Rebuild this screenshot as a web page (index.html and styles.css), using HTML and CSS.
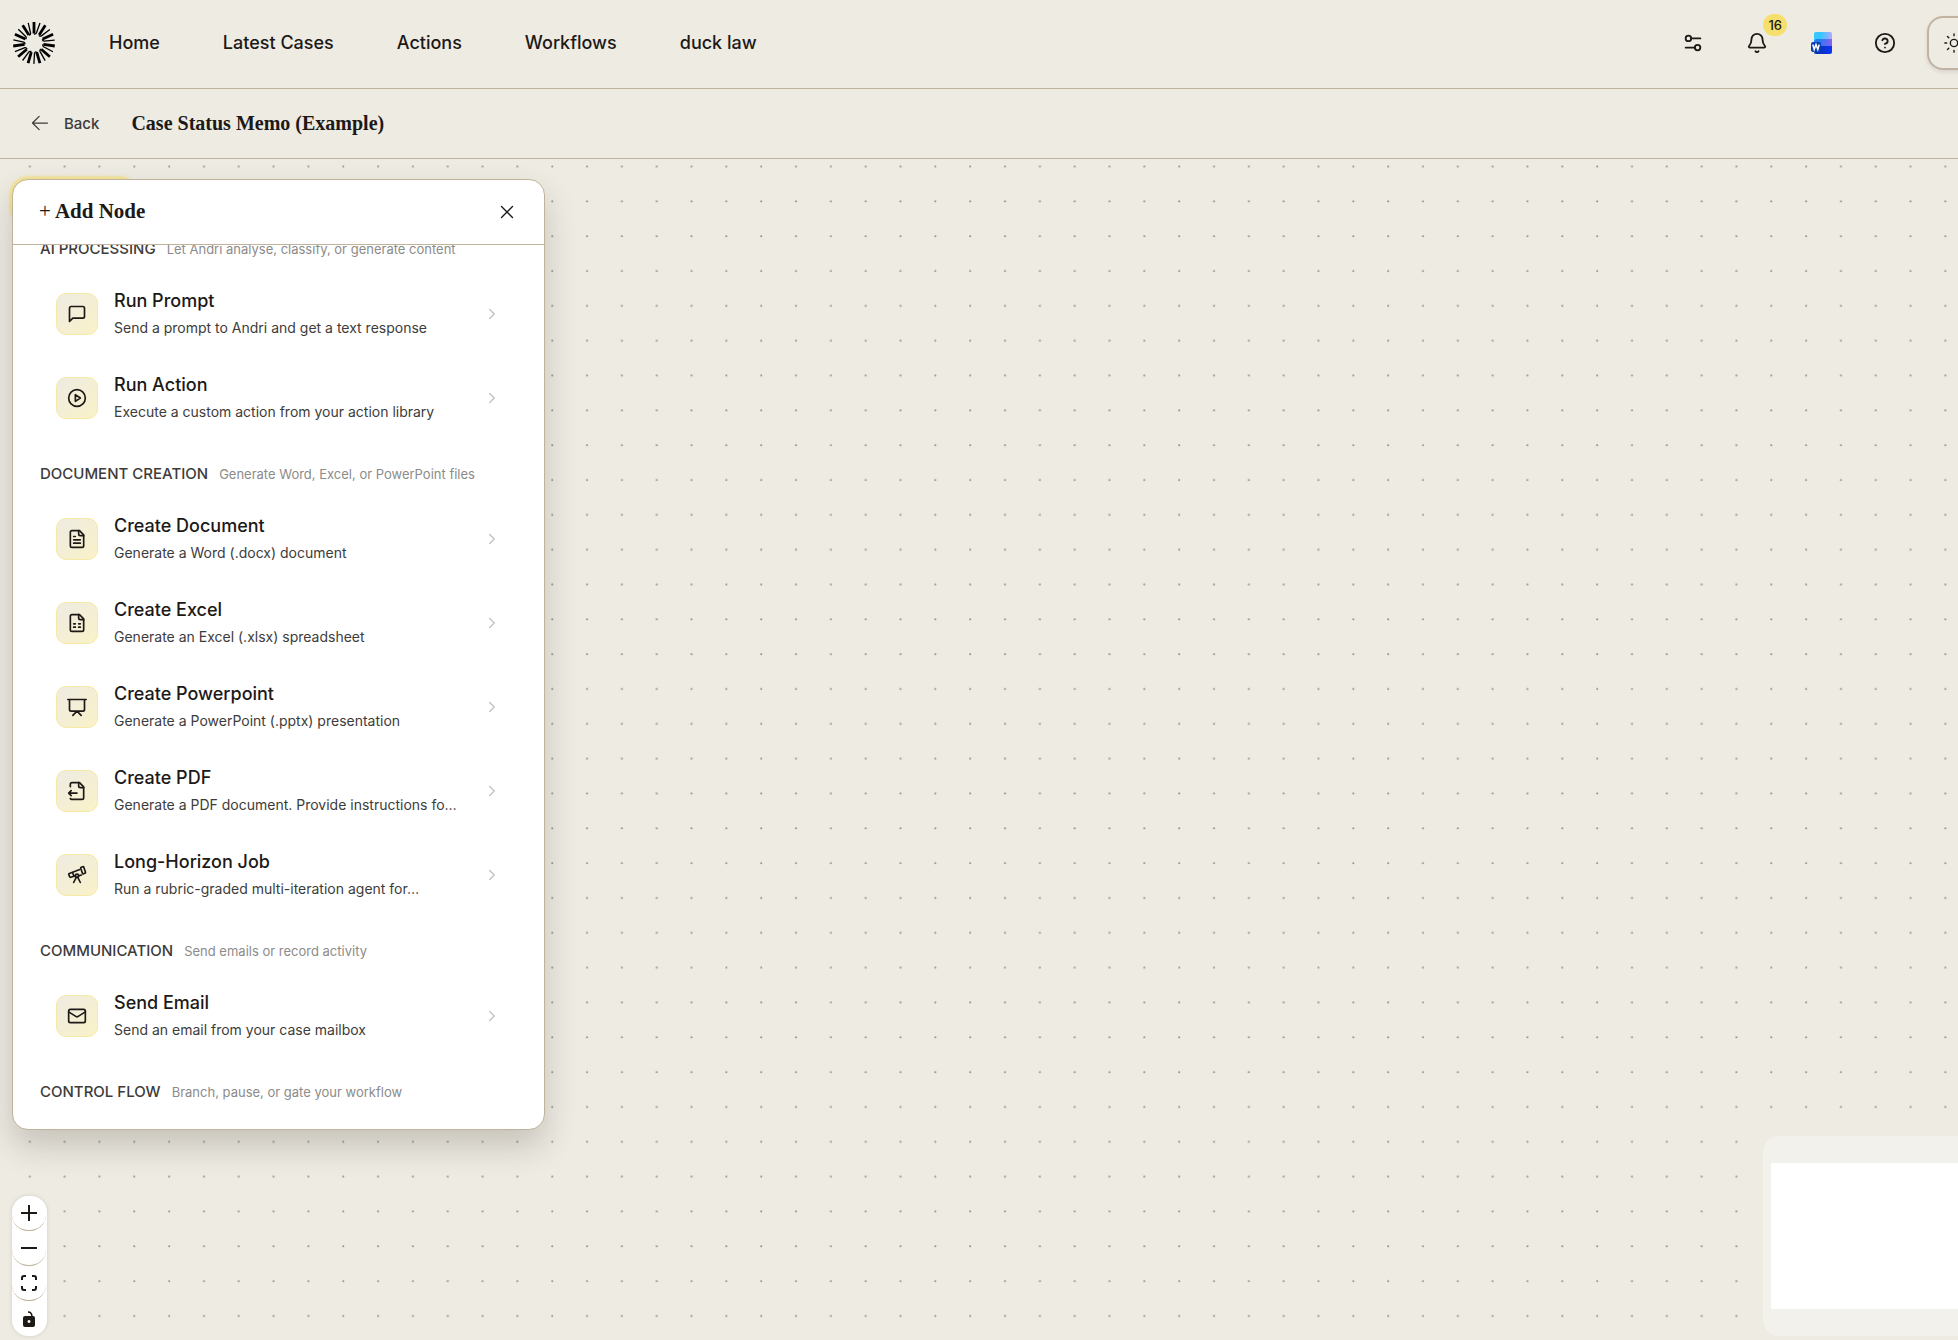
FILE: index.html
```
<!DOCTYPE html>
<html lang="en">
<head>
  <meta charset="UTF-8" />
  <meta name="viewport" content="width=device-width, initial-scale=1.0" />
  <title>Case Status Memo (Example)</title>
  <link rel="stylesheet" href="styles.css">
</head>
<body>
  <header class="topbar">
    <a class="logo" href="#" aria-label="Andri">
      <svg width="44" height="44" viewBox="-22 -22 44 44" stroke="#000" fill="none">
        <defs>
          <g id="ray">
            <path d="M0-21V-9.500" stroke-width="2.800" />
            <path d="M6-20L2.400-10Q1.800-8.800 0-9" stroke-width="1.300" />
          </g>
        </defs>
        <use href="#ray" />
        <use href="#ray" transform="rotate(32.7)" />
        <use href="#ray" transform="rotate(65.5)" />
        <use href="#ray" transform="rotate(98.2)" />
        <use href="#ray" transform="rotate(130.9)" />
        <use href="#ray" transform="rotate(163.6)" />
        <use href="#ray" transform="rotate(196.4)" />
        <use href="#ray" transform="rotate(229.1)" />
        <use href="#ray" transform="rotate(261.8)" />
        <use href="#ray" transform="rotate(294.5)" />
        <use href="#ray" transform="rotate(327.3)" />
      </svg>
    </a>
    <nav class="nav">
      <a href="#">Home</a>
      <a href="#">Latest Cases</a>
      <a href="#">Actions</a>
      <a href="#">Workflows</a>
      <a href="#">duck law</a>
    </nav>
    <div class="tools">
      <button class="tool" aria-label="Settings">
        <svg class="icon" width="22" height="22" viewBox="0 0 24 24"><circle cx="7" cy="7" r="3" /><path d="M10 7h10" /><circle cx="17" cy="17" r="3" /><path d="M14 17H4" /></svg>
      </button>
      <button class="tool" aria-label="Notifications">
        <svg class="icon" width="22" height="22" viewBox="0 0 24 24"><path d="M10.300 21a2 2 0 0 0 3.400 0" /><path d="M3.300 15.300A1 1 0 0 0 4 17h16a1 1 0 0 0 .7-1.700C19.400 14 18 12.500 18 8A6 6 0 0 0 6 8c0 4.500-1.400 6-2.700 7.300" /></svg>
        <span class="badge">16</span>
      </button>
      <button class="tool" aria-label="Word add-in">
        <svg width="22" height="22" viewBox="0 0 22 22">
          <defs>
            <linearGradient id="w1"><stop offset="0.4" stop-color="#35c8ff" /><stop offset="1" stop-color="#b7a6ff" /></linearGradient>
            <linearGradient id="w2"><stop offset="0.2" stop-color="#1b7df0" /><stop offset="1" stop-color="#8763f0" /></linearGradient>
            <linearGradient id="w3"><stop offset="0" stop-color="#0a2fa8" /><stop offset="1" stop-color="#0a35f5" /></linearGradient>
          </defs>
          <rect x="4" y="0" width="18" height="12" rx="2" fill="url(#w1)" />
          <path d="M4 10q0-3 4-3h14v9H4z" fill="url(#w2)" />
          <path d="M4 17q0-3 4-3h14v6q0 2-2 2H6q-2 0-2-2z" fill="url(#w3)" />
          <rect x="1" y="10" width="10" height="10" rx="2" fill="#0a3cb8" />
          <path d="M2.800 12.500l1.400 5 1.800-5 1.800 5 1.400-5" fill="none" stroke="#fff" stroke-width="1.500" />
        </svg>
      </button>
      <button class="tool" aria-label="Help">
        <svg class="icon" width="22" height="22" viewBox="0 0 24 24"><circle cx="12" cy="12" r="10" /><path d="M9.100 9a3 3 0 0 1 5.800 1c0 2-3 3-3 3" /><path d="M12 17h.01" /></svg>
      </button>
      <button class="theme" aria-label="Theme">
        <svg class="icon thin" width="22" height="22" viewBox="0 0 24 24"><circle cx="12" cy="12" r="4" /><path d="M12 2v2M12 20v2M4.900 4.900l1.400 1.400M17.700 17.700l1.400 1.400M2 12h2M20 12h2M6.300 17.700l-1.400 1.400M19.100 4.900l-1.400 1.400" /></svg>
      </button>
    </div>
  </header>

  <div class="subbar">
    <a class="back" href="#">
      <svg class="icon thin" width="20" height="20" viewBox="0 0 24 24"><path d="M11 20l-8-8 8-8M3 12h18" /></svg>
      Back
    </a>
    <h1>Case Status Memo (Example)</h1>
  </div>

  <main class="canvas">
    <svg class="dots" width="100%" height="100%">
      <pattern id="dot" x="28.600" y="6.300" width="34.830" height="34.830" patternUnits="userSpaceOnUse"><circle cx="1.200" cy="1.200" r="1.050" fill="#91919a" /></pattern>
      <rect width="100%" height="100%" fill="url(#dot)" />
    </svg>

    <button class="add-button" aria-label="Add Node"></button>

    <!-- Add node panel -->
    <section class="panel">
      <div class="panel-header">
        <h2><span class="plus">+</span> Add Node</h2>
        <button class="close" aria-label="Close">
          <svg class="icon thin" width="22" height="22" viewBox="0 0 24 24"><path d="M18 6L6 18M6 6l12 12" /></svg>
        </button>
      </div>
      <div class="panel-body">
        <div class="group">
          <h3>AI PROCESSING</h3><p>Let Andri analyse, classify, or generate content</p>
        </div>
        <button class="node">
          <span class="node-icon"><svg class="icon" width="20" height="20" viewBox="0 0 24 24"><path d="M21 15a2 2 0 0 1-2 2H7l-4 4V5a2 2 0 0 1 2-2h14a2 2 0 0 1 2 2z" /></svg></span>
          <span class="node-text"><span class="node-title">Run Prompt</span><span class="node-desc">Send a prompt to Andri and get a text response</span></span>
          <svg class="icon chevron" width="18" height="18" viewBox="0 0 24 24"><path d="M9 18l6-6-6-6" /></svg>
        </button>
        <button class="node">
          <span class="node-icon"><svg class="icon" width="20" height="20" viewBox="0 0 24 24"><circle cx="12" cy="12" r="10" /><path d="M10 8l6 4-6 4z" /></svg></span>
          <span class="node-text"><span class="node-title">Run Action</span><span class="node-desc">Execute a custom action from your action library</span></span>
          <svg class="icon chevron" width="18" height="18" viewBox="0 0 24 24"><path d="M9 18l6-6-6-6" /></svg>
        </button>

        <div class="group">
          <h3>DOCUMENT CREATION</h3><p>Generate Word, Excel, or PowerPoint files</p>
        </div>
        <button class="node">
          <span class="node-icon"><svg class="icon" width="20" height="20" viewBox="0 0 24 24"><path d="M15 2H6a2 2 0 0 0-2 2v16a2 2 0 0 0 2 2h12a2 2 0 0 0 2-2V7z" /><path d="M14 2v4a2 2 0 0 0 2 2h4M10 9H8M16 13H8M16 17H8" /></svg></span>
          <span class="node-text"><span class="node-title">Create Document</span><span class="node-desc">Generate a Word (.docx) document</span></span>
          <svg class="icon chevron" width="18" height="18" viewBox="0 0 24 24"><path d="M9 18l6-6-6-6" /></svg>
        </button>
        <button class="node">
          <span class="node-icon"><svg class="icon" width="20" height="20" viewBox="0 0 24 24"><path d="M15 2H6a2 2 0 0 0-2 2v16a2 2 0 0 0 2 2h12a2 2 0 0 0 2-2V7z" /><path d="M14 2v4a2 2 0 0 0 2 2h4M8 13h2M14 13h2M8 17h2M14 17h2" /></svg></span>
          <span class="node-text"><span class="node-title">Create Excel</span><span class="node-desc">Generate an Excel (.xlsx) spreadsheet</span></span>
          <svg class="icon chevron" width="18" height="18" viewBox="0 0 24 24"><path d="M9 18l6-6-6-6" /></svg>
        </button>
        <button class="node">
          <span class="node-icon"><svg class="icon" width="20" height="20" viewBox="0 0 24 24"><path d="M1 3h22M21 3v12a2 2 0 0 1-2 2H5a2 2 0 0 1-2-2V3M7 22l5-5 5 5" /></svg></span>
          <span class="node-text"><span class="node-title">Create Powerpoint</span><span class="node-desc">Generate a PowerPoint (.pptx) presentation</span></span>
          <svg class="icon chevron" width="18" height="18" viewBox="0 0 24 24"><path d="M9 18l6-6-6-6" /></svg>
        </button>
        <button class="node">
          <span class="node-icon"><svg class="icon" width="20" height="20" viewBox="0 0 24 24"><path d="M14 2v4a2 2 0 0 0 2 2h4" /><path d="M4 7V4a2 2 0 0 1 2-2h9l5 5v13a2 2 0 0 1-2 2H6a2 2 0 0 1-2-1" /><path d="M12 14.500H2M5 11.500l-3 3 3 3" /></svg></span>
          <span class="node-text"><span class="node-title">Create PDF</span><span class="node-desc">Generate a PDF document. Provide instructions fo…</span></span>
          <svg class="icon chevron" width="18" height="18" viewBox="0 0 24 24"><path d="M9 18l6-6-6-6" /></svg>
        </button>
        <button class="node">
          <span class="node-icon"><svg class="icon" width="20" height="20" viewBox="0 0 24 24"><path d="M10.100 12.800l-5.700 1.900a1 1 0 0 1-1.200-.6l-1-2.600a1 1 0 0 1 .6-1.300L15.300 5.500" /><path d="M13.600 13.200l3.700-1.200M16 21l-3.100-6.200M8 21l3.100-6.200M6.600 9l1.900 4.600M16.500 3.900a1 1 0 0 1 .6-1.200l1.900-.6a1 1 0 0 1 1.200.6l2 6a1 1 0 0 1-.6 1.200l-1.900.7a1 1 0 0 1-1.200-.6z" /><circle cx="12" cy="13" r="2" /></svg></span>
          <span class="node-text"><span class="node-title">Long-Horizon Job</span><span class="node-desc">Run a rubric-graded multi-iteration agent for…</span></span>
          <svg class="icon chevron" width="18" height="18" viewBox="0 0 24 24"><path d="M9 18l6-6-6-6" /></svg>
        </button>

        <div class="group">
          <h3>COMMUNICATION</h3><p>Send emails or record activity</p>
        </div>
        <button class="node">
          <span class="node-icon"><svg class="icon" width="20" height="20" viewBox="0 0 24 24"><rect x="2" y="4" width="20" height="16" rx="2" /><path d="M22 7l-9 5.700a2 2 0 0 1-2 0L2 7" /></svg></span>
          <span class="node-text"><span class="node-title">Send Email</span><span class="node-desc">Send an email from your case mailbox</span></span>
          <svg class="icon chevron" width="18" height="18" viewBox="0 0 24 24"><path d="M9 18l6-6-6-6" /></svg>
        </button>

        <div class="group">
          <h3>CONTROL FLOW</h3><p>Branch, pause, or gate your workflow</p>
        </div>
      </div>
    </section>

    <!-- Zoom controls -->
    <div class="controls">
      <button aria-label="Zoom in"><svg width="16" height="16" viewBox="0 0 16 16"><path d="M0 8h16M8 0v16" stroke="#1c1917" stroke-width="2" /></svg></button>
      <button aria-label="Zoom out"><svg width="16" height="16" viewBox="0 0 16 16"><path d="M0 8h16" stroke="#1c1917" stroke-width="2" /></svg></button>
      <button aria-label="Fit view"><svg width="16" height="16" viewBox="0 0 16 16"><path d="M1 5V3q0-2 2-2h2M11 1h2q2 0 2 2v2M15 11v2q0 2-2 2h-2M5 15H3q-2 0-2-2v-2" fill="none" stroke="#1c1917" stroke-width="2" /></svg></button>
      <button aria-label="Toggle interactivity"><svg width="16" height="16" viewBox="0 0 16 16"><path d="M7 1q4 0 4 5" fill="none" stroke="#1c1917" stroke-width="1.500" /><path fill-rule="evenodd" d="M4 5h8q2 0 2 2v7q0 2-2 2H4q-2 0-2-2V7q0-2 2-2zM8 9a1.500 1.500 0 1 0 .01 0z" fill="#1c1917" /></svg></button>
    </div>

    <div class="minimap"><div class="minimap-view"></div></div>
  </main>
</body>
</html>
```
FILE: styles.css
```
* { box-sizing: border-box; }
body {
  font-family: Inter, sans-serif;
  background: #eeebe3;
  color: #1c1917;
  margin: 0;
  height: 100vh;
  display: flex;
  flex-direction: column;
  overflow: hidden;
}
h1, h2, h3, p { margin: 0; }
a { color: inherit; text-decoration: none; }
button {
  font-family: inherit;
  color: inherit;
  background: none;
  border: none;
  padding: 0;
  cursor: pointer;
}
svg { display: block; }
.icon {
  fill: none;
  stroke: currentColor;
  stroke-width: 2;
  stroke-linecap: round;
  stroke-linejoin: round;
}
.thin { stroke-width: 1.5; }

/* Top bar */
.topbar {
  display: flex;
  align-items: center;
  height: 89px;
  padding: 0 12px 3px;
  border-bottom: 1px solid #c0b39c;
}
.nav {
  display: flex;
  gap: 63px;
  margin-left: 53px;
  font-size: 18px;
  font-weight: 500;
}
.tools {
  display: flex;
  align-items: center;
  gap: 24px;
  margin-left: auto;
  margin-right: -35px;
}
.tool {
  position: relative;
  display: flex;
  align-items: center;
  justify-content: center;
  width: 40px;
  height: 40px;
}
.badge {
  position: absolute;
  top: -9px;
  right: -10px;
  padding: 0 5px;
  border-radius: 11px;
  background: #f6df6c;
  font-size: 13px;
  font-weight: 500;
  line-height: 22px;
}
.theme {
  display: flex;
  align-items: center;
  width: 54px;
  height: 54px;
  margin-left: -2px;
  padding-left: 14px;
  border: 2px solid #c0b3a1;
  border-radius: 16px;
  box-shadow: 0 2px 4px rgba(0,0,0,0.1);
}

/* Page title */
.subbar {
  display: flex;
  align-items: center;
  gap: 32px;
  height: 70px;
  padding: 0 30px 1px;
  border-bottom: 1px solid #c0b39c;
}
.back {
  display: flex;
  align-items: center;
  gap: 14px;
  color: #3d3c3a;
  font-size: 15px;
  font-weight: 500;
}
h1, h2 {
  font-family: "Liberation Serif", serif;
  font-size: 20px;
  font-weight: 700;
}
h2 { font-size: 21px; }
.plus { font-weight: 400; }

/* Canvas */
.canvas {
  position: relative;
  flex: 1;
  overflow: hidden;
}
.dots {
  position: absolute;
  inset: 0;
}
.add-button {
  position: absolute;
  top: 20px;
  left: 12px;
  width: 124px;
  height: 44px;
  border-radius: 16px;
  background: #f6df6c;
  box-shadow: 0 0 2px 3px rgba(246,223,108,0.6);
}
.panel {
  position: absolute;
  top: 20px;
  bottom: 210px;
  left: 12px;
  width: 533px;
  display: flex;
  flex-direction: column;
  overflow: hidden;
  background: #fff;
  border: 1px solid #c0b39c;
  border-radius: 16px;
  box-shadow: 0 16px 32px rgba(40,35,25,0.2);
}
.panel-header {
  display: flex;
  align-items: center;
  justify-content: space-between;
  flex: none;
  height: 65px;
  padding: 0 26px 1px;
  border-bottom: 1px solid #c0b39c;
}
.panel-body {
  flex: 1;
  overflow: hidden;
  padding: 0 27px;
}
.group {
  display: flex;
  align-items: center;
  gap: 11px;
  height: 57px;
  padding-top: 10px;
}
.group:first-child { margin-top: -30px; }
h3 {
  color: #3d3c3a;
  font-size: 15px;
  font-weight: 500;
}
.group p {
  color: #8c8b8a;
  font-size: 13px;
}
.node {
  display: flex;
  align-items: center;
  gap: 16px;
  width: 100%;
  height: 84px;
  padding: 0 16px;
  text-align: left;
}
.node-icon {
  display: flex;
  align-items: center;
  justify-content: center;
  flex: none;
  width: 42px;
  height: 42px;
  border: 1px solid #f6e9a4;
  border-radius: 10px;
  background: linear-gradient(135deg, #eeebe3, #faf2c8);
}
.node-text {
  flex: 1;
  min-width: 0;
}
.node-title, .node-desc {
  display: block;
  white-space: nowrap;
}
.node-title {
  font-size: 18px;
  font-weight: 500;
  line-height: 28px;
}
.node-desc {
  color: #3d3c3a;
  font-size: 14px;
  line-height: 26px;
}
.chevron {
  flex: none;
  color: #c4c4c4;
}

/* Overlays in the canvas corners */
.controls {
  position: absolute;
  left: 12px;
  bottom: 4px;
  width: 35px;
  border-radius: 16px;
  background: #fff;
  box-shadow: 0 0 4px rgba(0,0,0,0.12);
}
.controls button {
  display: flex;
  align-items: center;
  justify-content: center;
  width: 34px;
  height: 35px;
  border-bottom: 1px solid #c0b39c;
  border-radius: 16px;
}
.controls button:last-child { border-bottom: none; }
.minimap {
  position: absolute;
  right: -71px;
  bottom: 4px;
  width: 266px;
  height: 200px;
  padding: 27px 8px;
  border-radius: 16px;
  background: #f2f1eb;
}
.minimap-view {
  height: 100%;
  background: #fff;
}
```
